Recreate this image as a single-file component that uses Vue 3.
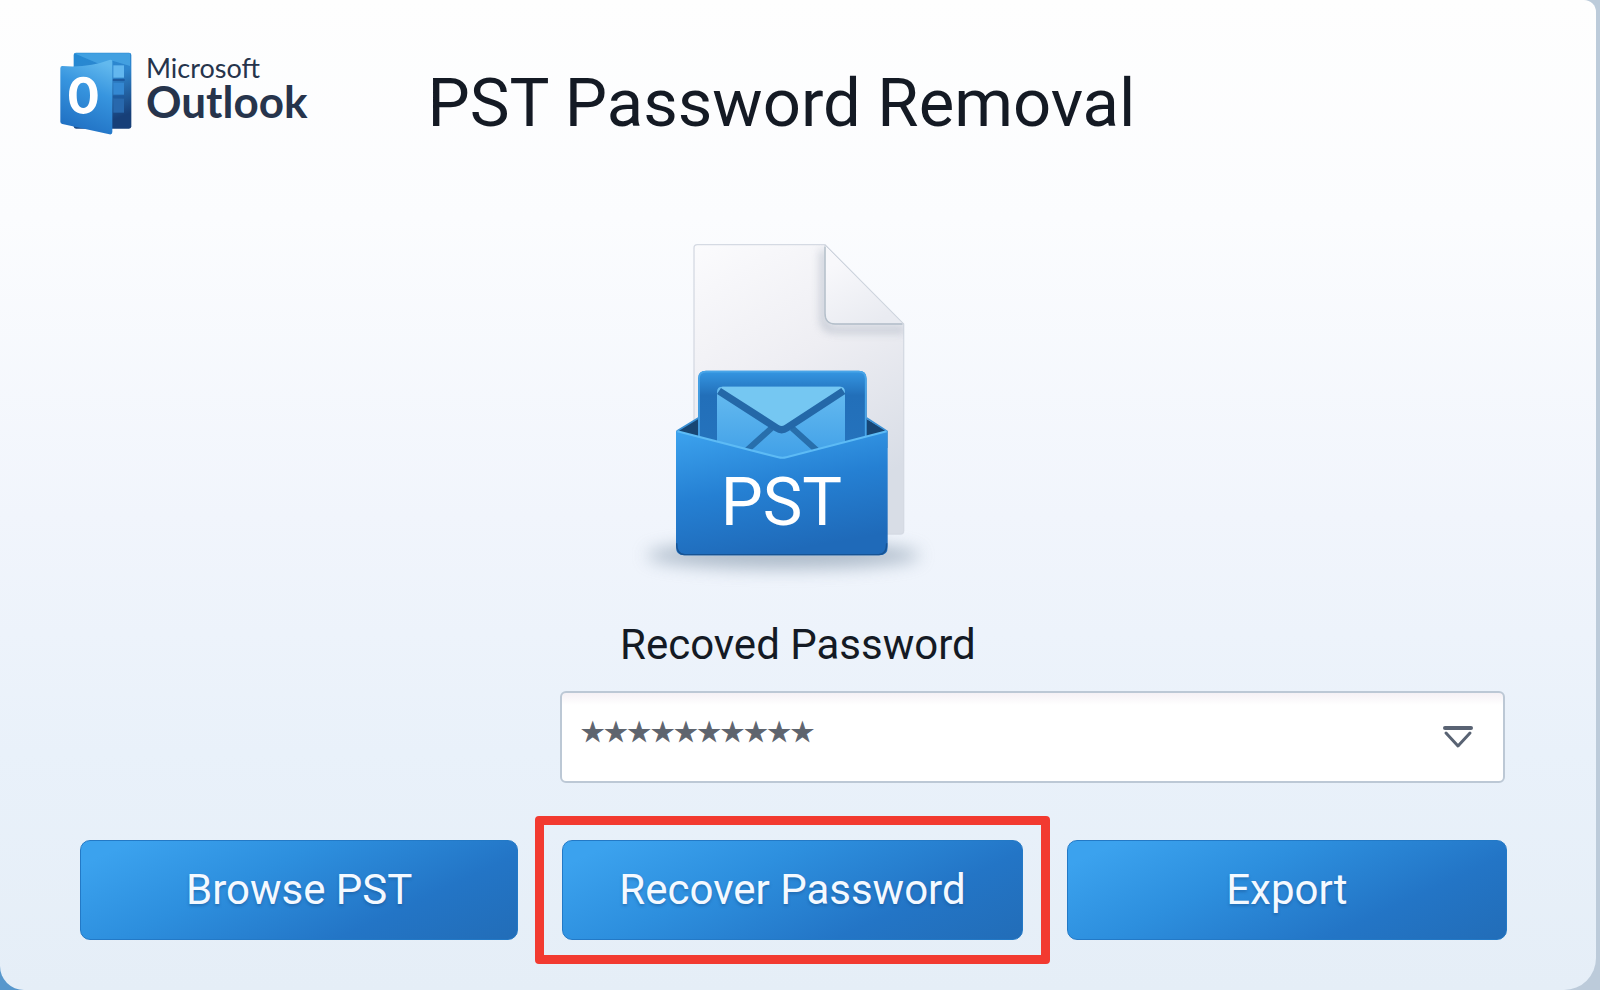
<template>
  <main class="window">
    <header class="header">
      <div class="brand">
        <svg class="brandicon" viewBox="0 0 216 252" aria-hidden="true">
          <defs>
            <linearGradient id="logoBack" x1="0" y1="0" x2="0.3" y2="1">
              <stop offset="0" stop-color="#2489d3" />
              <stop offset="0.45" stop-color="#2f86ce" />
              <stop offset="1" stop-color="#173f78" />
            </linearGradient>
            <linearGradient id="logoFront" x1="0.7" y1="0" x2="0.4" y2="1">
              <stop offset="0" stop-color="#62b9ee" />
              <stop offset="0.4" stop-color="#3795df" />
              <stop offset="1" stop-color="#1f6fc2" />
            </linearGradient>
          </defs>
          <rect x="41" y="2" width="173" height="228" rx="7" fill="url(#logoBack)" />
          <path d="M42 4h168v38l-50-15-42 9z" fill="#56b4ee" opacity="0.55" />
          <path d="M160 40h32v37h-32z" fill="#63b7ef" />
          <path d="M160 92h32v36h-32z" fill="#3488d2" />
          <path d="M160 140h32v42h-32z" fill="#2868ad" />
          <path d="M158 84h36M158 134h36" stroke="#1d5a9f" stroke-width="6" />
          <path d="M7 42Q85 48 148 24q9-3 9 6v210q0 9-9 7L7 216q-6-1-6-7V49q0-7 6-7z" fill="url(#logoFront)" />
          <path
            d="M70 74c28 0 43 22 43 56s-15 56-43 56-43-22-43-56 15-56 43-56zm0 18c-14 0-20 14-20 38s6 38 20 38 20-14 20-38-6-38-20-38z"
            fill="#fff"
          />
        </svg>
        <p class="brandname">
          <span class="brandtop">Microsoft</span>
          <span class="brandbottom">Outlook</span>
        </p>
      </div>
      <h1 class="title">PST Password Removal</h1>
    </header>

    <svg class="artwork" viewBox="0 0 1020 1080" role="img" aria-label="PST">
      <defs>
        <linearGradient id="paper" x1="0" y1="0" x2="0.4" y2="1">
          <stop offset="0" stop-color="#fbfbfd" />
          <stop offset="0.5" stop-color="#eeeef3" />
          <stop offset="1" stop-color="#d8dde6" />
        </linearGradient>
        <linearGradient id="fold" x1="0.2" y1="0.2" x2="0.6" y2="1">
          <stop offset="0" stop-color="#f8f8fb" />
          <stop offset="1" stop-color="#e9ebf1" />
        </linearGradient>
        <linearGradient id="folder" x1="0" y1="0" x2="0" y2="1">
          <stop offset="0" stop-color="#3597e3" />
          <stop offset="0.25" stop-color="#226fb9" />
          <stop offset="1" stop-color="#2674be" />
        </linearGradient>
        <linearGradient id="letter" x1="0" y1="0" x2="0" y2="1">
          <stop offset="0" stop-color="#67bcf0" />
          <stop offset="1" stop-color="#3a9be6" />
        </linearGradient>
        <linearGradient id="pocket" x1="0.1" y1="0" x2="0.4" y2="1">
          <stop offset="0" stop-color="#3ba1ed" />
          <stop offset="0.5" stop-color="#2580d3" />
          <stop offset="1" stop-color="#1f6ab9" />
        </linearGradient>
        <filter id="soft" x="-20%" y="-100%" width="140%" height="300%">
          <feGaussianBlur stdDeviation="26" />
        </filter>
        <filter id="softSmall" x="-20%" y="-20%" width="140%" height="140%">
          <feGaussianBlur stdDeviation="12" />
        </filter>
        <clipPath id="sheetClip">
          <path d="M232 44h383l236 238v620q0 10-10 10H232q-10 0-10-10V54q0-10 10-10z" />
        </clipPath>
      </defs>
      <ellipse cx="490" cy="976" rx="410" ry="40" fill="#8295a9" opacity="0.6" filter="url(#soft)" />
      <path d="M232 44h383l236 238v620q0 10-10 10H232q-10 0-10-10V54q0-10 10-10z" fill="url(#paper)" stroke="#d5dae3" stroke-width="4" />
      <g clip-path="url(#sheetClip)">
        <path d="M610 60v205q0 34 35 34h210" fill="none" stroke="#a6afbd" stroke-width="16" opacity="0.7" filter="url(#softSmall)" />
      </g>
      <path d="M615 45v205q0 32 30 32h206z" fill="url(#fold)" stroke="#ccd3dc" stroke-width="3" />
      <path d="M615 50v200q0 32 30 32h202" fill="none" stroke="#b4bfca" stroke-width="4" />
      <path d="M170 604l65-40h500l67 40v50H170z" fill="#174674" />
      <path d="M170 604l65-40M740 564l62 40" stroke="#3b91d5" stroke-width="5" />
      <path d="M234 720V446q0-24 24-24h458q24 0 24 24v274z" fill="url(#folder)" />
      <path d="M237 700V446q0-21 21-21h458q21 0 21 21v254" fill="none" stroke="#49a5e8" stroke-width="5" />
      <path d="M291 720V486q0-16 16-16h354q14 0 14 16v234z" fill="url(#letter)" />
      <path d="M455 594l-80 72M516 594l80 72" stroke="#286fac" stroke-width="18" />
      <path d="M307 470h354l12 8-173 111q-15 10-30 0L297 480z" fill="#75c7f2" />
      <path d="M297 483l173 111q15 10 30 0l170-111" fill="none" stroke="#2468a8" stroke-width="22" />
      <path d="M168 603L475 682q12 3 24 0L803 603v349q0 24-24 24H192q-24 0-24-24z" fill="url(#pocket)" />
      <path d="M172 604L475 682q12 3 24 0L800 604" fill="none" stroke="#5dbbf5" stroke-width="6" />
      <path d="M170 940q0 34 24 34h582q24 0 24-34" fill="none" stroke="#175393" stroke-width="4" />
      <text class="artworktext" x="484" y="884" text-anchor="middle">PST</text>
    </svg>

    <form class="form" @submit.prevent>
      <label class="label" for="password">Recoved Password</label>
      <div class="field">
        <input id="password" v-model="password" class="password" type="text" autocomplete="off" />
        <button class="toggle" type="button" aria-label="Show passwords">
          <svg viewBox="0 0 30 24" aria-hidden="true">
            <path d="M2 3h26" stroke-width="4" />
            <path d="M3 8l12 13L27 8" stroke-width="3" />
          </svg>
        </button>
      </div>
    </form>

    <div class="actions">
      <div v-for="action in actions" :key="action.label" class="action" :class="{ highlighted: action.highlighted }">
        <button class="button" type="button">{{ action.label }}</button>
      </div>
    </div>
  </main>
</template>

<script setup>
import { ref } from 'vue'

// Masked value, one star for each character
const password = ref('★'.repeat(10))

const actions = [
  { label: 'Browse PST', highlighted: false },
  { label: 'Recover Password', highlighted: true },
  { label: 'Export', highlighted: false }
]
</script>

<style>
body {
  margin: 0;
  background: linear-gradient(90deg, #5797cc 0, #5797cc 30px, #bccbda 60px, #bccbda 100%);
}
</style>

<style scoped>
* {
  box-sizing: border-box;
  margin: 0;
}

.window {
  display: flex;
  flex-direction: column;
  min-height: 100vh;
  margin-right: 4px;
  padding: 52px 89px 49px 60px;
  border-radius: 0 12px 32px 24px;
  background: linear-gradient(180deg, #fefefe 0%, #fbfcfe 22%, #f1f5fc 52%, #e9f1fa 76%, #e5eef7 100%);
  color: #141a24;
  font-family: Roboto, "Liberation Sans", sans-serif;
}

.header {
  display: flex;
  align-items: flex-start;
  gap: 120px;
}

.brand {
  display: flex;
  gap: 14px;
}

.brandicon {
  width: 72px;
  height: 84px;
}

.brandname {
  display: flex;
  flex-direction: column;
  color: #26344c;
  font-family: Lato, sans-serif;
}

.brandtop {
  font-size: 27px;
  line-height: 32px;
}

.brandbottom {
  font-size: 44px;
  font-weight: 700;
  line-height: 34px;
}

.title {
  font-size: 67px;
  font-weight: 400;
  line-height: 102px;
  white-space: nowrap;
}

.artwork {
  display: block;
  align-self: center;
  width: 340px;
  height: 360px;
  margin-top: 76px;
  margin-left: 12px;
}

.artworktext {
  fill: #fff;
  font-family: Roboto, sans-serif;
  font-size: 200px;
}

.form {
  display: flex;
  flex-direction: column;
  gap: 16px;
  margin: 25px 2px 0 500px;
}

.label {
  align-self: flex-start;
  margin-left: 60px;
  font-size: 42px;
  line-height: 60px;
}

.field {
  display: flex;
  align-items: center;
  height: 92px;
  padding: 0 30px 0 19px;
  border: 2px solid #bcc8d5;
  border-radius: 6px;
  background: linear-gradient(180deg, #f5f1f5 0, #fff 12px);
}

.password {
  flex: 1;
  min-width: 0;
  height: 88px;
  padding: 0 0 10px;
  border: 0;
  outline: 0;
  background: none;
  color: #5e646e;
  font-family: "DejaVu Sans", sans-serif;
  font-size: 26px;
  -webkit-text-stroke: 1px #5e646e;
}

.toggle {
  display: flex;
  padding: 0;
  border: 0;
  background: none;
  cursor: pointer;
}

.toggle svg {
  width: 30px;
  height: 24px;
  fill: none;
  stroke: #596373;
  stroke-linecap: round;
  stroke-linejoin: round;
}

.actions {
  display: grid;
  grid-template-columns: 439fr 461fr 441fr;
  gap: 44px;
  margin-top: 57px;
  margin-left: 20px;
}

.action {
  position: relative;
}

.highlighted::after {
  position: absolute;
  inset: -24px -27px;
  border: 9px solid #f23a30;
  border-radius: 4px;
  content: "";
  pointer-events: none;
}

.button {
  width: 100%;
  height: 100px;
  border: 1px solid #2379c6;
  border-radius: 10px;
  background: linear-gradient(155deg, #3ba2ee 8%, #2d8fde 38%, #2375c6 72%, #226db8 100%);
  color: #f4f9ff;
  font-family: inherit;
  font-size: 42px;
  line-height: 60px;
  text-shadow: 0 2px 3px rgba(20, 70, 130, 0.4);
  cursor: pointer;
}
</style>
